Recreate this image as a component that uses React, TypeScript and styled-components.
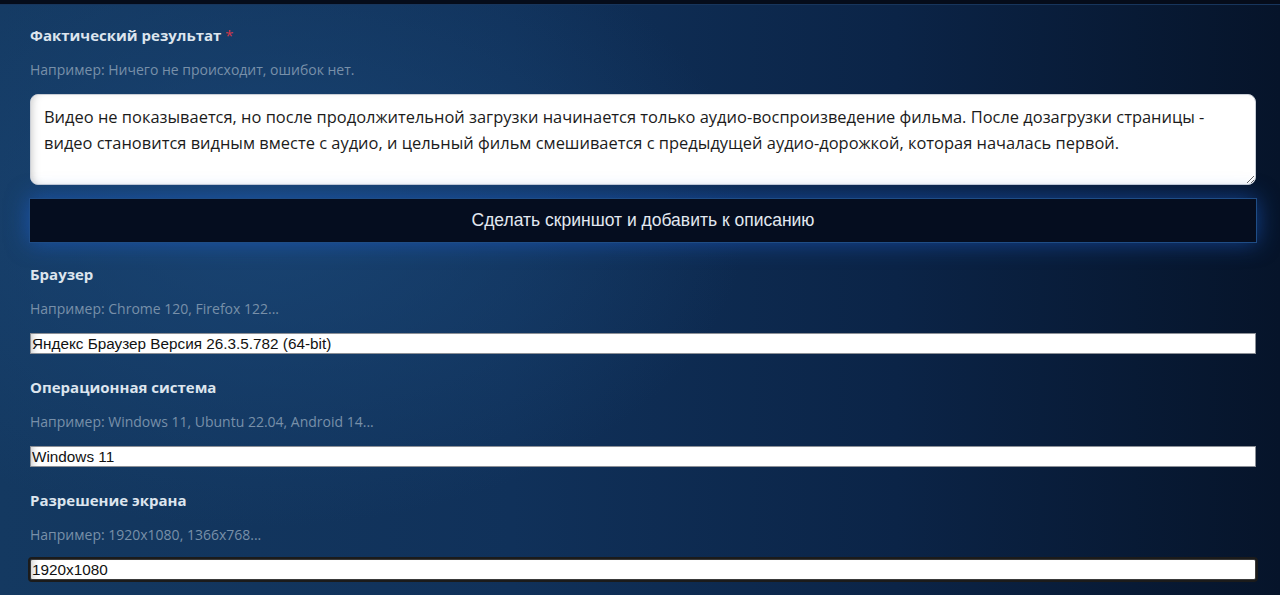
import React from "react";
import styled, { createGlobalStyle } from "styled-components";

const Global = createGlobalStyle`
  html, body {
    margin: 0;
    padding: 0;
    background: #071428;
  }
  * {
    box-sizing: border-box;
  }
`;

export default function App() {
  return (
    <Page>
      <Global />
      <TopStrip />
      <Form>
        <Field>
          <Label>
            Фактический результат <Required>*</Required>
          </Label>
          <Hint>Например: Ничего не происходит, ошибок нет.</Hint>
          <TextArea
            defaultValue="Видео не показывается, но после продолжительной загрузки начинается только аудио-воспроизведение фильма. После дозагрузки страницы - видео становится видным вместе с аудио, и цельный фильм смешивается с предыдущей аудио-дорожкой, которая началась первой."
          />
        </Field>
        <ShotButton type="button">Сделать скриншот и добавить к описанию</ShotButton>
        <Field>
          <Label>Браузер</Label>
          <Hint>Например: Chrome 120, Firefox 122...</Hint>
          <TextInput defaultValue="Яндекс Браузер Версия 26.3.5.782 (64-bit)" />
        </Field>
        <Field>
          <Label>Операционная система</Label>
          <Hint>Например: Windows 11, Ubuntu 22.04, Android 14...</Hint>
          <TextInput defaultValue="Windows 11" />
        </Field>
        <Field>
          <Label>Разрешение экрана</Label>
          <Hint>Например: 1920x1080, 1366x768...</Hint>
          <TextInput $focused defaultValue="1920x1080" />
        </Field>
      </Form>
    </Page>
  );
}

const Page = styled.div`
  min-height: 100vh;
  background:
    radial-gradient(ellipse 55% 75% at 20% 35%, rgba(26, 70, 118, 0.85), rgba(26, 70, 118, 0) 70%),
    linear-gradient(90deg, #143961 0%, #10315a 40%, #0b2447 70%, #06142a 100%);
  font-family: "Open Sans", "Noto Sans", sans-serif;
  overflow: hidden;
`;

const TopStrip = styled.div`
  height: 5px;
  background: #050c1a;
  border-bottom: 1px solid #17355c;
`;

const Form = styled.div`
  display: flex;
  flex-direction: column;
  padding: 20px 24px 0 30px;
`;

const Field = styled.div`
  display: flex;
  flex-direction: column;
  margin-bottom: 23px;

  &:first-child {
    margin-bottom: 0;
  }
`;

const Label = styled.div`
  font-size: 15px;
  line-height: 20px;
  font-weight: 700;
  color: #dde5ee;
  margin-bottom: 15px;
`;

const Required = styled.span`
  color: #d2384a;
  font-weight: 400;
`;

const Hint = styled.div`
  font-size: 14px;
  line-height: 20px;
  color: #7890a9;
  margin-bottom: 14px;
`;

const TextArea = styled.textarea`
  width: 100%;
  height: 91px;
  padding: 9px 13px;
  border: 1px solid #c9ced6;
  border-radius: 8px;
  background: #ffffff;
  box-shadow: inset 6px 0 10px -6px rgba(0, 0, 0, 0.25);
  font-family: "Open Sans", "Noto Sans", sans-serif;
  font-size: 16.45px;
  line-height: 26px;
  color: #1b1b1b;
  resize: vertical;
  outline: none;
`;

const ShotButton = styled.button`
  margin: 13px -1px 21px;
  height: 45px;
  background: #050d1f;
  border: 1px solid #1f4d86;
  box-shadow: 0 0 22px rgba(30, 100, 220, 0.55);
  color: #e2e8f0;
  font-family: "Liberation Sans", Arial, sans-serif;
  font-size: 17.5px;
  cursor: pointer;
`;

const TextInput = styled.input<{ $focused?: boolean }>`
  width: 100%;
  height: 21px;
  padding: 0 1px;
  border: 1px solid ${(p) => (p.$focused ? "#3a3a3a" : "#8b8f96")};
  border-radius: ${(p) => (p.$focused ? "2px" : "0")};
  outline: ${(p) => (p.$focused ? "2px solid #1b1b1b" : "none")};
  outline-offset: 0;
  background: #ffffff;
  box-shadow: inset 8px 0 8px -8px rgba(0, 0, 0, 0.3);
  font-family: "Liberation Sans", Arial, sans-serif;
  font-size: 15.3px;
  color: #111;
`;
